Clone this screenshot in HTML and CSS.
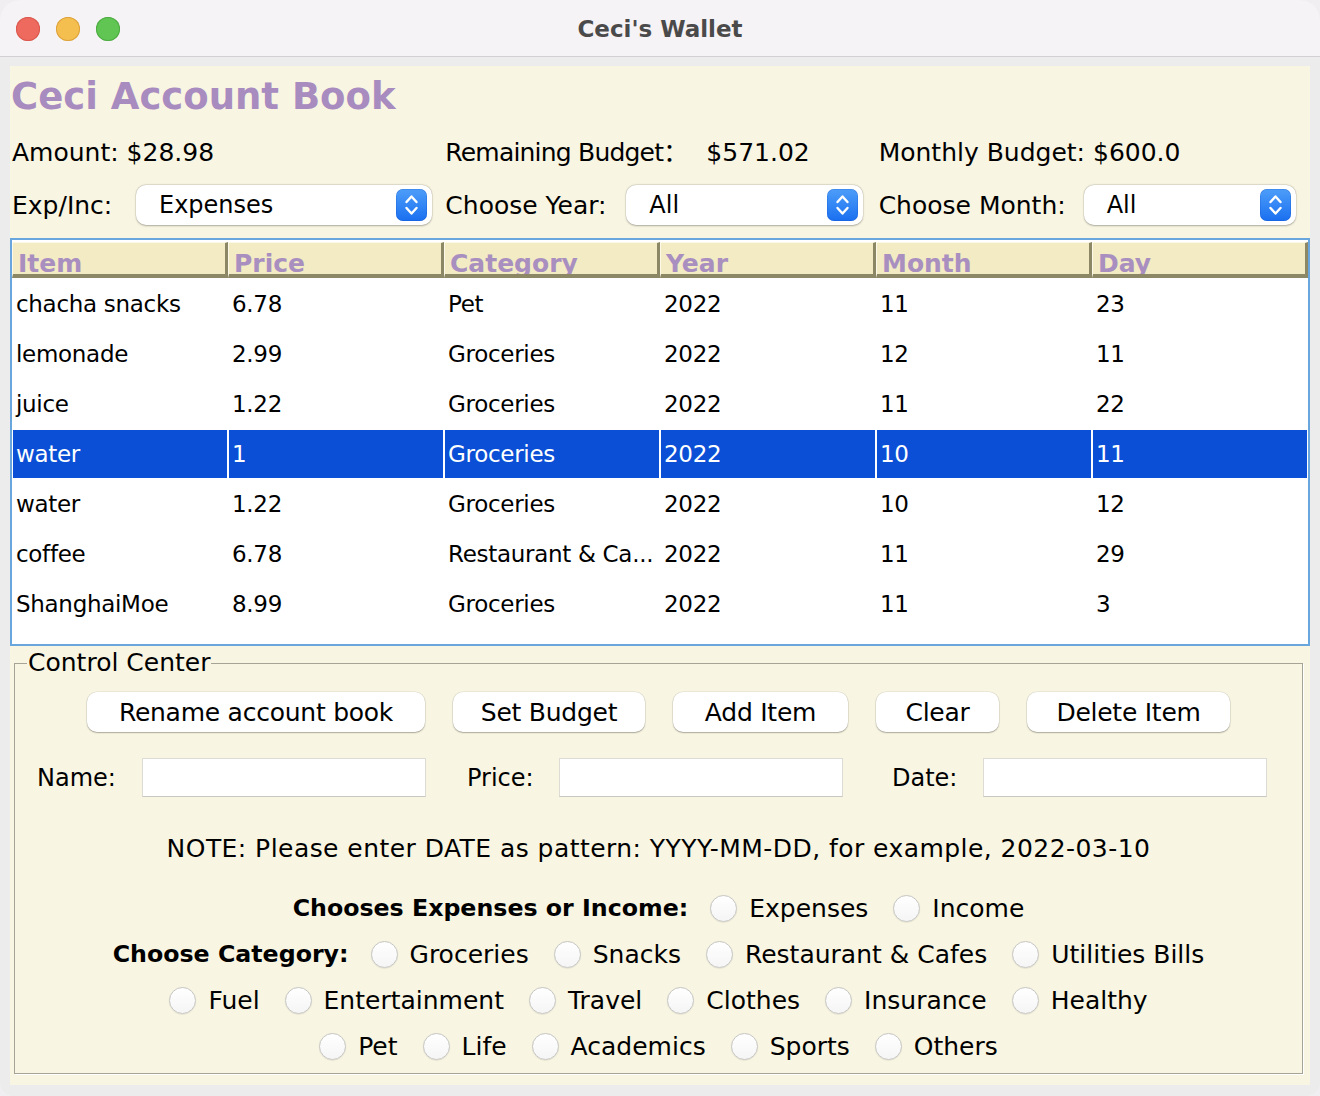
FILE: index.html
```html
<!DOCTYPE html>
<html lang="en">
<head>
<meta charset="utf-8">
<title>Ceci's Wallet</title>
<link rel="stylesheet" href="styles.css">
</head>
<body>
<div class="window">
  <header class="titlebar">
    <div class="lights">
      <span class="light red"></span>
      <span class="light yellow"></span>
      <span class="light green"></span>
    </div>
    <div class="wintitle">Ceci's Wallet</div>
    <div></div>
  </header>

  <main class="panel">
    <h1 class="book-title">Ceci Account Book</h1>

    <div class="info-row">
      <div class="cell">Amount: $28.98</div>
      <div class="cell"><span class="rb-label">Remaining Budget：</span>$571.02</div>
      <div class="cell">Monthly Budget: $600.0</div>
    </div>

    <div class="filter-row">
      <div class="fcell">
        <span class="flabel w-exp">Exp/Inc:</span>
        <div class="combo c-exp">
          <span class="combo-text">Expenses</span>
          <span class="arrows"><svg viewBox="0 0 31 32" width="31" height="32"><polyline points="10.5,13 15.5,7.5 20.5,13"/><polyline points="10.5,19 15.5,24.5 20.5,19"/></svg></span>
        </div>
      </div>
      <div class="fcell">
        <span class="flabel w-year">Choose Year:</span>
        <div class="combo c-year">
          <span class="combo-text">All</span>
          <span class="arrows"><svg viewBox="0 0 31 32" width="31" height="32"><polyline points="10.5,13 15.5,7.5 20.5,13"/><polyline points="10.5,19 15.5,24.5 20.5,19"/></svg></span>
        </div>
      </div>
      <div class="fcell">
        <span class="flabel w-month">Choose Month:</span>
        <div class="combo c-month">
          <span class="combo-text">All</span>
          <span class="arrows"><svg viewBox="0 0 31 32" width="31" height="32"><polyline points="10.5,13 15.5,7.5 20.5,13"/><polyline points="10.5,19 15.5,24.5 20.5,19"/></svg></span>
        </div>
      </div>
    </div>

    <div class="table">
      <div class="thead">
        <div class="th">Item</div>
        <div class="th">Price</div>
        <div class="th">Category</div>
        <div class="th">Year</div>
        <div class="th">Month</div>
        <div class="th">Day</div>
      </div>
      <div class="tbody">
        <div class="tr"><div class="td">chacha snacks</div><div class="td">6.78</div><div class="td">Pet</div><div class="td">2022</div><div class="td">11</div><div class="td">23</div></div>
        <div class="tr"><div class="td">lemonade</div><div class="td">2.99</div><div class="td">Groceries</div><div class="td">2022</div><div class="td">12</div><div class="td">11</div></div>
        <div class="tr"><div class="td">juice</div><div class="td">1.22</div><div class="td">Groceries</div><div class="td">2022</div><div class="td">11</div><div class="td">22</div></div>
        <div class="tr sel"><div class="td">water</div><div class="td">1</div><div class="td">Groceries</div><div class="td">2022</div><div class="td">10</div><div class="td">11</div></div>
        <div class="tr"><div class="td">water</div><div class="td">1.22</div><div class="td">Groceries</div><div class="td">2022</div><div class="td">10</div><div class="td">12</div></div>
        <div class="tr"><div class="td">coffee</div><div class="td">6.78</div><div class="td">Restaurant &amp; Ca...</div><div class="td">2022</div><div class="td">11</div><div class="td">29</div></div>
        <div class="tr"><div class="td">ShanghaiMoe</div><div class="td">8.99</div><div class="td">Groceries</div><div class="td">2022</div><div class="td">11</div><div class="td">3</div></div>
      </div>
    </div>

    <fieldset class="control">
      <legend>Control Center</legend>

      <div class="btn-row">
        <button class="btn b-rename">Rename account book</button>
        <button class="btn b-budget">Set Budget</button>
        <button class="btn b-add">Add Item</button>
        <button class="btn b-clear">Clear</button>
        <button class="btn b-delete">Delete Item</button>
      </div>

      <div class="field-row">
        <label class="llabel w-name" for="f-name">Name:</label>
        <input class="field" id="f-name" type="text">
        <label class="llabel w-price" for="f-price">Price:</label>
        <input class="field" id="f-price" type="text">
        <label class="llabel w-date" for="f-date">Date:</label>
        <input class="field" id="f-date" type="text">
      </div>

      <p class="note">NOTE: Please enter DATE as pattern: YYYY-MM-DD, for example, 2022-03-10</p>

      <div class="radio-row">
        <span class="rtitle">Chooses Expenses or Income:</span>
        <label class="opt"><input type="radio" name="kind">Expenses</label>
        <label class="opt"><input type="radio" name="kind">Income</label>
      </div>
      <div class="radio-row">
        <span class="rtitle">Choose Category:</span>
        <label class="opt"><input type="radio" name="cat">Groceries</label>
        <label class="opt"><input type="radio" name="cat">Snacks</label>
        <label class="opt"><input type="radio" name="cat">Restaurant &amp; Cafes</label>
        <label class="opt"><input type="radio" name="cat">Utilities Bills</label>
      </div>
      <div class="radio-row">
        <label class="opt"><input type="radio" name="cat">Fuel</label>
        <label class="opt"><input type="radio" name="cat">Entertainment</label>
        <label class="opt"><input type="radio" name="cat">Travel</label>
        <label class="opt"><input type="radio" name="cat">Clothes</label>
        <label class="opt"><input type="radio" name="cat">Insurance</label>
        <label class="opt"><input type="radio" name="cat">Healthy</label>
      </div>
      <div class="radio-row">
        <label class="opt"><input type="radio" name="cat">Pet</label>
        <label class="opt"><input type="radio" name="cat">Life</label>
        <label class="opt"><input type="radio" name="cat">Academics</label>
        <label class="opt"><input type="radio" name="cat">Sports</label>
        <label class="opt"><input type="radio" name="cat">Others</label>
      </div>
    </fieldset>
  </main>
</div>
</body>
</html>
```

FILE: styles.css
```css
* { box-sizing: border-box; }
html, body { margin: 0; padding: 0; }
body {
  background: #f1eef1;
  font-family: "DejaVu Sans", "Noto Sans CJK SC", sans-serif;
  color: #000;
}

.window {
  width: 1320px;
  height: 1096px;
  background: #ececec;
  border-radius: 20px 20px 14px 14px;
  overflow: hidden;
  display: flex;
  flex-direction: column;
}

/* ---------- title bar ---------- */
.titlebar {
  flex: none;
  height: 57px;
  background: #f5f3f5;
  border-bottom: 1px solid #d2d0d2;
  display: grid;
  grid-template-columns: 1fr auto 1fr;
  align-items: center;
}
.lights { display: flex; gap: 16px; padding-left: 16px; padding-top: 1px; }
.light { width: 24px; height: 24px; border-radius: 50%; }
.red { background: #ee6a5f; box-shadow: inset 0 0 0 1px #d9584e; }
.yellow { background: #f5bf4f; box-shadow: inset 0 0 0 1px #dba23e; }
.green { background: #61c554; box-shadow: inset 0 0 0 1px #4eaa42; }
.wintitle { font-weight: bold; font-size: 23px; color: #4b4a4b; padding-top: 1px; }

/* ---------- main panel ---------- */
.panel {
  margin: 9px 10px 0;
  height: 1019px;
  background: #f8f5e2;
  display: flex;
  flex-direction: column;
}
.book-title {
  margin: 0;
  padding: 1px 0 0 1px;
  height: 61px;
  line-height: 60px;
  font-size: 37px;
  font-weight: bold;
  color: #a88bbf;
}

.info-row {
  display: grid;
  grid-template-columns: repeat(3, 1fr);
  margin-top: 5px;
  height: 42px;
  line-height: 42px;
  font-size: 25px;
}
.cell { padding-left: 2px; white-space: nowrap; }
.rb-label { display: inline-block; width: 261px; letter-spacing: -0.8px; }

.filter-row {
  display: grid;
  grid-template-columns: repeat(3, 1fr);
  margin-top: 11px;
  height: 40px;
  font-size: 25px;
}
.fcell { display: flex; align-items: center; padding-left: 2px; white-space: nowrap; }
.flabel { flex: none; }
.w-exp { width: 124px; }
.w-year { width: 181px; }
.w-month { width: 205px; }

.combo {
  flex: none;
  height: 40px;
  background: #fff;
  border-radius: 10px;
  box-shadow: 0 0.5px 2px rgba(0, 0, 0, 0.28), 0 0 0 0.5px rgba(0, 0, 0, 0.08);
  display: flex;
  align-items: center;
  padding-left: 23px;
  font-size: 24px;
}
.c-exp { width: 296px; }
.c-year { width: 237px; }
.c-month { width: 212px; }
.arrows {
  margin-left: auto;
  margin-right: 5px;
  width: 31px;
  height: 32px;
  border-radius: 7px;
  background: linear-gradient(#4d9ef9, #1a6ff0);
  box-shadow: inset 0 0 0 0.5px rgba(0, 60, 180, 0.35);
  display: flex;
}
.arrows svg { display: block; }
.arrows polyline {
  fill: none;
  stroke: #fff;
  stroke-width: 2.4;
  stroke-linecap: round;
  stroke-linejoin: round;
}

/* ---------- table ---------- */
.table {
  flex: none;
  margin-top: 13px;
  height: 408px;
  border: 2px solid #6aa6de;
  background: #fff;
}
.thead {
  display: grid;
  grid-template-columns: repeat(6, 216px);
  margin-top: 2px;
}
.th {
  height: 36px;
  background: #f2ebc4;
  border-top: 1px solid #fcf9ea;
  border-left: 1px solid #fcf9ea;
  border-right: 3px solid #8c8765;
  border-bottom: 4px solid #8c8765;
  padding-left: 5px;
  overflow: hidden;
  font-size: 25px;
  font-weight: bold;
  line-height: 42px;
  color: #a98fc0;
}
.tbody { margin-top: 2px; }
.tr {
  display: grid;
  grid-template-columns: repeat(6, 216px);
  height: 50px;
}
.td {
  border-left: 1px solid transparent;
  border-right: 1px solid transparent;
  border-bottom: 2px solid transparent;
  padding-left: 3px;
  font-size: 23px;
  letter-spacing: -0.3px;
  line-height: 48px;
  white-space: nowrap;
  overflow: hidden;
}
.tr.sel .td {
  background: #0a4fd5;
  background-clip: padding-box;
  color: #fff;
}

/* ---------- control center ---------- */
.control {
  margin: 2px 7px 0 4px;
  padding: 14px 0 4px;
  min-width: 0;
  border: 1px solid #a6a496;
  box-shadow: 1px 1px 0 #fff;
  font-size: 25px;
}
.control legend {
  margin-left: 12px;
  padding: 0 1px;
  font-size: 25px;
  line-height: 30px;
}

.btn-row {
  display: flex;
  justify-content: center;
  gap: 28px;
  height: 40px;
}
.btn {
  height: 40px;
  padding: 0;
  border: 0;
  border-radius: 10px;
  background: #fff;
  box-shadow: 0 1px 1.5px rgba(0, 0, 0, 0.28), 0 0 0 0.5px rgba(0, 0, 0, 0.1);
  font-family: inherit;
  font-size: 25px;
  letter-spacing: -0.25px;
  color: #000;
}
.b-rename { width: 338px; }
.b-budget { width: 192px; }
.b-add { width: 175px; }
.b-clear { width: 123px; }
.b-delete { width: 203px; }

.field-row {
  display: flex;
  align-items: center;
  margin-top: 26px;
  height: 39px;
  padding-left: 22px;
}
.llabel { flex: none; font-size: 24px; }
.w-name { width: 105px; }
.w-price { width: 92px; margin-left: 41px; }
.w-date { width: 91px; margin-left: 49px; }
.field {
  flex: none;
  width: 284px;
  height: 39px;
  margin: 0;
  border: 1px solid #dddcd4;
  border-bottom-color: #c9c8c0;
  border-radius: 0;
  background: #fff;
}

.note {
  margin: 37px 0 0;
  line-height: 30px;
  text-align: center;
  white-space: nowrap;
  letter-spacing: 0.45px;
}

.radio-row {
  display: flex;
  justify-content: center;
  align-items: center;
  gap: 25px;
  height: 46px;
  white-space: nowrap;
}
.note + .radio-row { margin-top: 21px; }
.rtitle {
  font-weight: bold;
  font-size: 23.7px;
  margin-right: -3px;
}
.opt { display: flex; align-items: center; gap: 12px; }
.opt input {
  appearance: none;
  -webkit-appearance: none;
  margin: 0;
  width: 27px;
  height: 27px;
  border-radius: 50%;
  border: 1px solid #c6c6c4;
  background: linear-gradient(#ffffff, #f5f5f5);
  box-shadow: 0 0.5px 1px rgba(0, 0, 0, 0.12);
}
```
